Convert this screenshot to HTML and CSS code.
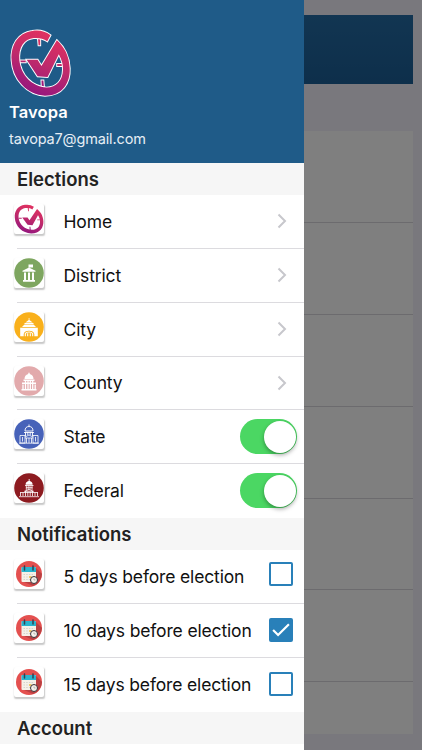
FILE: index.html
```html
<!DOCTYPE html>
<html lang="en">

<head>
    <meta charset="UTF-8">
    <meta name="viewport" content="width=device-width, initial-scale=1.0">
    <title>Tavopa</title>
    <link rel="stylesheet" href="styles.css">
</head>

<body>
    <!-- shared icons -->
    <svg class="defs" width="0" height="0">
        <defs>
            <linearGradient id="pink" x1="0.7" y1="0" x2="0.35" y2="1">
                <stop offset="0" stop-color="#e5325f" />
                <stop offset="0.5" stop-color="#bf2a6b" />
                <stop offset="1" stop-color="#92157f" />
            </linearGradient>
        </defs>
        <symbol id="logo" viewBox="26 84 190 210" preserveAspectRatio="none">
            <path d="M113 112h7v22h-5zM55 181h20v6h-19zM173 192h18v6h-18zM124 243h6l2 23h-7z" />
            <path d="M152 103C135 90 115 86 95 90C50 96 28 135 31 180C34 240 80 288 135 290C190 290 214 250 212 205C210 165 195 140 172 119L124 198L112 179H78L112 230L143 232L178 162C188 180 192 195 191 210C190 245 170 264 140 265C95 262 60 228 55 180C52 140 70 115 100 112C118 111 130 114 142 122Z" />
        </symbol>
        <symbol id="calendar" viewBox="0 0 30 30">
            <circle cx="15" cy="15" r="13" fill="#e4504f" />
            <path d="M22 9L28 15Q27 24 19 27L8 22Z" fill="#b94042" />
            <rect x="7.500" y="8" width="14.500" height="15" rx="1" fill="#f5f1e8" />
            <path d="M7.500 13V9q0-1 1-1H21q1 0 1 1v4z" fill="#29b5cf" />
            <path d="M10.500 7v4M19 7v4" stroke="#344052" stroke-width="1.500" stroke-linecap="round" />
            <path d="M9.500 15.500h11M9.500 18h11M9.500 20.500h7" stroke="#d5d3cc" stroke-width="1.200" stroke-dasharray="1.500 1.200" />
            <rect x="15" y="17" width="2.500" height="2" fill="#f0c766" />
            <circle cx="20" cy="21" r="3.500" fill="#f4f2ec" stroke="#3b3338" stroke-width="1" />
            <path d="M20 19.500V21h1.500" stroke="#999" stroke-width=".6" fill="none" />
        </symbol>
        <symbol id="chevron" viewBox="0 0 10 16">
            <path d="M1.500 1.500L8 8L1.500 14.500" fill="none" stroke="#c7c7cc" stroke-width="2" />
        </symbol>
    </svg>

    <div class="page">
        <div class="banner"></div>
        <div class="card">
            <div class="item"></div>
            <div class="item"></div>
            <div class="item"></div>
            <div class="item"></div>
            <div class="item"></div>
            <div class="item"></div>
        </div>
    </div>
    <div class="backdrop"></div>

    <div class="menu">
        <div class="profile">
            <svg class="logo"><use href="#logo" x="1" y="1" width="61" height="68" /></svg>
            <div class="name">Tavopa</div>
            <div class="email">tavopa7@gmail.com</div>
        </div>

        <h2>Elections</h2>
        <ul>
            <li>
                <svg class="icon home"><use href="#logo" x="0" y="0" width="30" height="30" /></svg>
                <div class="line"><span>Home</span><svg class="chevron"><use href="#chevron" /></svg></div>
            </li>
            <li>
                <svg class="icon" viewBox="0 0 30 30">
                    <circle cx="15" cy="15" r="14.800" fill="#7ea660" />
                    <g fill="#fff">
                        <path d="M14.500 6.500h4.500v3h-3.700v1.200h-.8zM8.500 12.800L15 9.500l6.500 3.300v1h-13z" />
                        <path d="M10 14.500h2v7.500h-2zM14 14.500h2v7.500h-2zM18 14.500h2v7.500h-2zM9 22h12v1.800H9z" />
                    </g>
                </svg>
                <div class="line"><span>District</span><svg class="chevron"><use href="#chevron" /></svg></div>
            </li>
            <li>
                <svg class="icon" viewBox="0 0 30 30">
                    <circle cx="15" cy="15" r="14.800" fill="#f9b01b" />
                    <g fill="#fff">
                        <path d="M14.700 6h.7v2l3.300 2.500h-7.300L14.700 8zM10.500 11h9v1.200h-9zM8 15l2.200-2.200h9.600L22 15z" />
                        <path d="M6.200 15.700h17.600v8.500h-3.500V22q-.8-3.300-5.300-3.300T9.700 22v2.200H6.200z" />
                    </g>
                    <path d="M11.300 24.200V21.500q1-1.500 3.700-1.500t3.700 1.500v2.700M13.700 24.200v-3M16.300 24.200v-3" fill="none" stroke="#fff" stroke-width="1.100" />
                </svg>
                <div class="line"><span>City</span><svg class="chevron"><use href="#chevron" /></svg></div>
            </li>
            <li>
                <svg class="icon" viewBox="0 0 30 30">
                    <circle cx="15" cy="15" r="14.800" fill="#e2aaac" />
                    <g fill="#fff">
                        <path d="M10.500 13q0-4 3.800-5V6.800h1.400V8q3.800 1 3.800 5zM9.500 13.500h11V15h-11z" />
                        <path d="M8 16.500h14V18H8zM7.500 23h15v1.500h-15z" />
                    </g>
                    <path d="M9 18.500v4.500M11.500 15v8M14 15v8M16.300 15v8M18.700 15v8M21.200 18.500v4.500" stroke="#fff" stroke-width="1.300" />
                </svg>
                <div class="line"><span>County</span><svg class="chevron"><use href="#chevron" /></svg></div>
            </li>
            <li>
                <svg class="icon" viewBox="0 0 30 30">
                    <circle cx="15" cy="15" r="14.800" fill="#4762b9" />
                    <path d="M15 5.500v2M11 12q0-4.500 4-4.500t4 4.500zM10 13.500h10M11.500 13v4M13.800 13v3M16.200 13v3M18.500 13v4" fill="none" stroke="#fff" stroke-width=".9" />
                    <path d="M6 16.500h5V24H6zM19 16.500h5V24h-5zM11 18l4-2l4 2M11 19h8M12.500 19v5M15 19v5M17.500 19v5M5 24.200h20M8.500 18v4.500M21.500 18v4.500" fill="none" stroke="#fff" stroke-width=".8" />
                </svg>
                <div class="line"><span>State</span><label class="switch"><i></i></label></div>
            </li>
            <li>
                <svg class="icon" viewBox="0 0 30 30">
                    <circle cx="15" cy="15" r="14.800" fill="#8d1b20" />
                    <path d="M14.700 6h.9v2q3 .7 3 3.700h-7q0-3 3.100-3.700z" fill="#fff" />
                    <path d="M11 12.500h8.500M12 14.700h6.500M12.300 12v5M14.200 12v5M16 12v5M18 12v5M10.500 18.300L15 16.500l4.500 1.800zM6 19.500h18M6.500 19.500V23M9 19.500V23M11.500 18v5M13.800 19v4M16.200 19v4M18.500 18v5M21 19.500V23M23.500 19.500V23M5 23.700h20" fill="none" stroke="#fff" stroke-width=".8" />
                </svg>
                <div class="line"><span>Federal</span><label class="switch"><i></i></label></div>
            </li>
        </ul>

        <h2>Notifications</h2>
        <ul>
            <li>
                <svg class="icon"><use href="#calendar" /></svg>
                <div class="line"><span>5 days before election</span><div class="check up"></div></div>
            </li>
            <li>
                <svg class="icon"><use href="#calendar" /></svg>
                <div class="line"><span>10 days before election</span>
                    <div class="check on">
                        <svg viewBox="0 0 24 24"><path d="M2.500 12L8.500 18L21.500 5" fill="none" stroke="#fff" stroke-width="2.600" /></svg>
                    </div>
                </div>
            </li>
            <li>
                <svg class="icon"><use href="#calendar" /></svg>
                <div class="line"><span>15 days before election</span><div class="check"></div></div>
            </li>
        </ul>

        <h2>Account</h2>
    </div>
</body>

</html>
```
FILE: styles.css
```css
* {
    margin: 0;
    padding: 0;
    box-sizing: border-box;
}

body {
    position: relative;
    width: 422px;
    height: 750px;
    overflow: hidden;
    font-family: Inter, "Liberation Sans", sans-serif;
    color: #111;
}

.defs {
    position: absolute;
}

/* page behind the menu */
.page {
    height: 750px;
    padding: 15px 9px 0;
    background: #f3f1fa;
}

.banner {
    height: 69px;
    background: linear-gradient(#246ba4, #1b5e96);
}

.card {
    height: 603px;
    margin-top: 47px;
    background: #fff;
}

.item {
    height: 91.9px;
    border-bottom: 1px solid #d8d7dc;
}

.backdrop {
    position: absolute;
    inset: 0;
    background: rgba(0, 0, 0, 0.5);
}

/* side menu */
.menu {
    position: absolute;
    top: 0;
    left: 0;
    width: 304px;
    height: 750px;
    overflow: hidden;
    background: #fff;
}

.profile {
    height: 163px;
    padding: 28px 9px 0;
    background: #1f5b88;
    color: #fff;
}

.logo {
    display: block;
    width: 63px;
    height: 70px;
    overflow: visible;
    fill: url(#pink);
    stroke: #fff;
    stroke-width: 6px;
    paint-order: stroke;
}

.logo use,
#logo {
    overflow: visible;
}

.name {
    margin-top: 4px;
    font-size: 16.5px;
    font-weight: 600;
    line-height: 21px;
    letter-spacing: 0.1px;
}

.email {
    margin-top: 6px;
    font-size: 14.5px;
    line-height: 20px;
    letter-spacing: -0.15px;
    color: #e6eef5;
}

h2 {
    height: 32px;
    padding-left: 17px;
    background: #f6f6f6;
    color: #222;
    font-size: 18.5px;
    font-weight: 600;
    line-height: 33px;
}

ul {
    list-style: none;
}

li {
    display: flex;
    height: 53.85px;
    padding-left: 14px;
}

.icon {
    flex: none;
    width: 30px;
    height: 30px;
    margin-top: 9px;
    border-radius: 2px;
    background: #fff;
    box-shadow: 0.5px 1.5px 1.5px rgba(0, 0, 0, 0.22);
}

.home {
    fill: url(#pink);
}

.line {
    display: flex;
    flex: 1;
    align-items: center;
    justify-content: space-between;
    margin-left: -27px;
    padding-left: 46.5px;
    border-bottom: 1px solid #dcdbdf;
    font-size: 17.5px;
    letter-spacing: -0.15px;
}

li:last-child .line {
    padding-bottom: 1px;
    border-bottom: none;
}

.chevron {
    width: 10px;
    height: 16px;
    margin-right: 17px;
}

.switch {
    width: 57px;
    height: 35px;
    margin-right: 7px;
    padding: 1.5px;
    border-radius: 18px;
    background: #4bd763;
}

.switch i {
    display: block;
    width: 32px;
    height: 32px;
    margin-left: 22px;
    border-radius: 50%;
    background: #fff;
    box-shadow: 0 2px 4px rgba(0, 0, 0, 0.35);
}

.check {
    width: 24px;
    height: 24px;
    margin-right: 11px;
    border: 2px solid #2980b9;
    border-radius: 2px;
}

.check svg {
    display: block;
    width: 20px;
    height: 20px;
}

.on {
    background: #2980b9;
}

.up {
    margin-bottom: 5px;
}
```
